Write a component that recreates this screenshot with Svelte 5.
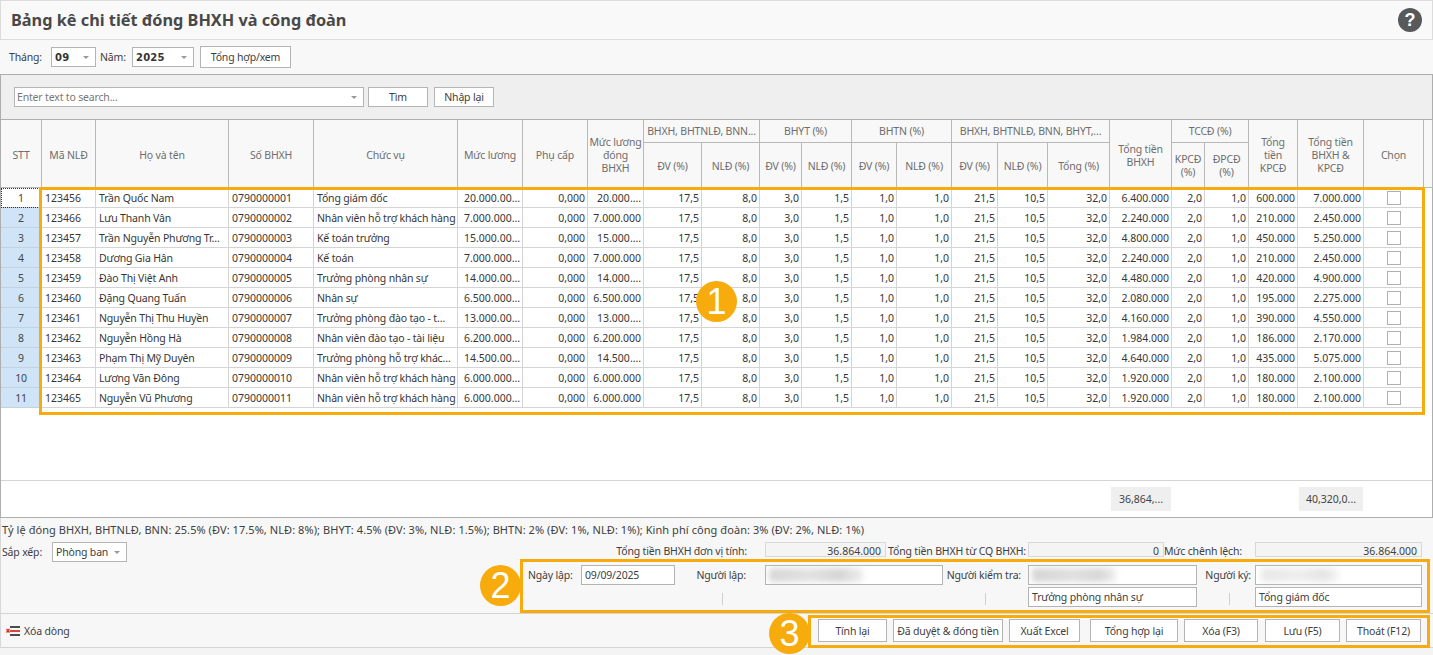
<script>
  const cols = [41,54,133,85,144,65,65,56,58,58,42,50,45,55,46,50,62,62,33,44,49,66,60,9];
  const rows = [
    ['123456','Trần Quốc Nam','0790000001','Tổng giám đốc','20.000.00…','20.000.…','6.400.000','600.000','7.000.000'],
    ['123466','Lưu Thanh Vân','0790000002','Nhân viên hỗ trợ khách hàng','7.000.000…','7.000.000','2.240.000','210.000','2.450.000'],
    ['123457','Trần Nguyễn Phương Tr…','0790000003','Kế toán trưởng','15.000.00…','15.000.…','4.800.000','450.000','5.250.000'],
    ['123458','Dương Gia Hân','0790000004','Kế toán','7.000.000…','7.000.000','2.240.000','210.000','2.450.000'],
    ['123459','Đào Thị Việt Anh','0790000005','Trưởng phòng nhân sự','14.000.00…','14.000.…','4.480.000','420.000','4.900.000'],
    ['123460','Đặng Quang Tuấn','0790000006','Nhân sự','6.500.000…','6.500.000','2.080.000','195.000','2.275.000'],
    ['123461','Nguyễn Thị Thu Huyền','0790000007','Trưởng phòng đào tạo - t…','13.000.00…','13.000.…','4.160.000','390.000','4.550.000'],
    ['123462','Nguyễn Hồng Hà','0790000008','Nhân viên đào tạo - tài liệu','6.200.000…','6.200.000','1.984.000','186.000','2.170.000'],
    ['123463','Phạm Thị Mỹ Duyên','0790000009','Trưởng phòng hỗ trợ khác…','14.500.00…','14.500.…','4.640.000','435.000','5.075.000'],
    ['123464','Lương Văn Đông','0790000010','Nhân viên hỗ trợ khách hàng','6.000.000…','6.000.000','1.920.000','180.000','2.100.000'],
    ['123465','Nguyễn Vũ Phương','0790000011','Nhân viên hỗ trợ khách hàng','6.000.000…','6.000.000','1.920.000','180.000','2.100.000'],
  ];
  const rates = ['17,5','8,0','3,0','1,5','1,0','1,0','21,5','10,5','32,0'];
  const buttons = ['Tính lại','Đã duyệt & đóng tiền','Xuất Excel','Tổng hợp lại','Xóa (F3)','Lưu (F5)','Thoát (F12)'];
</script>

<div class="page">
  <header class="title">
    <h1>Bảng kê chi tiết đóng BHXH và công đoàn</h1>
    <span class="help">?</span>
  </header>

  <div class="filter">
    <span class="lbl thang">Tháng:</span>
    <span class="select bold month">09<i class="caret"></i></span>
    <span class="lbl nam">Năm:</span>
    <span class="select bold year">2025<i class="caret"></i></span>
    <button class="btn view">Tổng hợp/xem</button>
  </div>

  <div class="search">
    <span class="select box">Enter text to search...<i class="caret"></i></span>
    <button class="btn find">Tìm</button>
    <button class="btn find">Nhập lại</button>
  </div>

  <div class="grid">
    <table>
      <colgroup>
        {#each cols as w}<col style="width:{w}px" />{/each}
      </colgroup>
      <thead>
        <tr class="h1">
          <th class="span" rowspan="2">STT</th>
          <th class="span" rowspan="2">Mã NLĐ</th>
          <th class="span" rowspan="2">Họ và tên</th>
          <th class="span" rowspan="2">Số BHXH</th>
          <th class="span" rowspan="2">Chức vụ</th>
          <th class="span" rowspan="2">Mức lương</th>
          <th class="span" rowspan="2">Phụ cấp</th>
          <th class="span" rowspan="2">Mức lương<br />đóng<br />BHXH</th>
          <th colspan="2">BHXH, BHTNLĐ, BNN...</th>
          <th colspan="2">BHYT (%)</th>
          <th colspan="2">BHTN (%)</th>
          <th colspan="3">BHXH, BHTNLĐ, BNN, BHYT,...</th>
          <th class="span" rowspan="2">Tổng tiền<br />BHXH</th>
          <th colspan="2">TCCĐ (%)</th>
          <th class="span" rowspan="2">Tổng<br />tiền<br />KPCĐ</th>
          <th class="span" rowspan="2">Tổng tiền<br />BHXH &amp;<br />KPCĐ</th>
          <th class="span" rowspan="2">Chọn</th>
          <th rowspan="2"></th>
        </tr>
        <tr class="h2">
          <th>ĐV (%)</th><th>NLĐ (%)</th>
          <th>ĐV (%)</th><th>NLĐ (%)</th>
          <th>ĐV (%)</th><th>NLĐ (%)</th>
          <th>ĐV (%)</th><th>NLĐ (%)</th><th>Tổng (%)</th>
          <th>KPCĐ<br />(%)</th><th>ĐPCĐ<br />(%)</th>
        </tr>
      </thead>
      <tbody>
        {#each rows as r, i}
          <tr>
            <td class="stt" class:first={i === 0}>{i + 1}</td>
            <td class="num">{r[0]}</td>
            <td>{r[1]}</td>
            <td class="num">{r[2]}</td>
            <td>{r[3]}</td>
            <td class="n">{r[4]}</td>
            <td class="n">0,000</td>
            <td class="n">{r[5]}</td>
            {#each rates as v}<td class="n">{v}</td>{/each}
            <td class="n">{r[6]}</td>
            <td class="n">2,0</td>
            <td class="n">1,0</td>
            <td class="n">{r[7]}</td>
            <td class="n">{r[8]}</td>
            <td class="chk"><span class="check"></span></td>
            <td class="end"></td>
          </tr>
        {/each}
      </tbody>
    </table>
    <div class="empty"></div>
    <div class="totals">
      <span class="sum a">36,864,...</span>
      <span class="sum b">40,320,0...</span>
    </div>
  </div>

  <section class="bottom">
    <p class="note">Tỷ lệ đóng BHXH, BHTNLĐ, BNN: 25.5% (ĐV: 17.5%, NLĐ: 8%); BHYT: 4.5% (ĐV: 3%, NLĐ: 1.5%); BHTN: 2% (ĐV: 1%, NLĐ: 1%); Kinh phí công đoàn: 3% (ĐV: 2%, NLĐ: 1%)</p>
    <div class="split">
      <div class="sort">
        <span class="lbl">Sắp xếp:</span>
        <span class="select sortsel">Phòng ban<i class="caret"></i></span>
      </div>
      <div class="right">
        <div class="sums">
          <span class="lab l1">Tổng tiền BHXH đơn vị tính:</span>
          <span class="ro w1">36.864.000</span>
          <span class="lab l2">Tổng tiền BHXH từ CQ BHXH:</span>
          <span class="ro w2">0</span>
          <span class="lab l3">Mức chênh lệch:</span>
          <span class="ro w3">36.864.000</span>
        </div>
        <div class="form">
          <div class="fdate">
            <span class="lbl">Ngày lập:</span>
            <span class="input date">09/09/2025</span>
          </div>
          <div class="fperson p1">
            <span class="flabel">Người lập:<i class="tick"></i></span>
            <div class="stack"><span class="input"><b class="blur b1"></b></span></div>
          </div>
          <div class="fperson p2">
            <span class="flabel">Người kiểm tra:<i class="tick"></i></span>
            <div class="stack">
              <span class="input"><b class="blur b2"></b></span>
              <span class="input">Trưởng phòng nhân sự</span>
            </div>
          </div>
          <div class="fperson p3">
            <span class="flabel">Người ký:<i class="tick"></i></span>
            <div class="stack">
              <span class="input"><b class="blur b3"></b></span>
              <span class="input">Tổng giám đốc</span>
            </div>
          </div>
        </div>
      </div>
    </div>
  </section>

  <footer class="actions">
    <span class="del">
      <svg width="14" height="10" viewBox="0 0 14 10">
        <path d="M0.5 3l3 3.5M3.5 3L0.5 6.5" stroke="#e2231a" stroke-width="1.3" fill="none" />
        <path d="M4 1h10M4 9h10" stroke="#4d4d4d" stroke-width="2" fill="none" />
        <path d="M4 5h10" stroke="#d9463e" stroke-width="2" fill="none" />
      </svg>
      Xóa dòng
    </span>
    <div class="btns">
      {#each buttons as b, i}<button class="btn act a{i}">{b}</button>{/each}
    </div>
  </footer>

  <div class="hl h-1"></div>
  <div class="hl h-2"></div>
  <div class="hl h-3"></div>
  <span class="badge b-1">1</span>
  <span class="badge b-2">2</span>
  <span class="badge b-3">3</span>
</div>

<style>
  :global(body) { margin: 0; background: #fff; }
  .page {
    position: relative; width: 1433px; height: 655px; overflow: hidden;
    font-family: "Noto Sans", "DejaVu Sans", sans-serif; font-size: 10.5px; color: #3c3c3c;
    letter-spacing: -0.17px;
    background: #f4f4f4; display: flex; flex-direction: column; box-sizing: border-box;
  }
  .title {
    height: 40px; box-sizing: border-box; flex: none; display: flex; align-items: center; justify-content: space-between;
    padding: 0 10px; background: #f9f9f9; border: 1px solid #dcdcdc;
  }
  h1 { margin: 0; font: bold 16.3px "Noto Sans", sans-serif; color: #484848; letter-spacing: 0; }
  .help {
    width: 24px; height: 24px; border-radius: 50%; background: #58595b; color: #fff; flex: none;
    font: bold 18px/24px "Liberation Sans", sans-serif; text-align: center; letter-spacing: 0;
  }
  .filter { height: 34px; flex: none; box-sizing: border-box; display: flex; align-items: center; padding: 0 0 0 9px; background: #f8f8f8; }
  .lbl { color: #404040; }
  .thang { width: 42px; }
  .select {
    position: relative; display: inline-flex; align-items: center; box-sizing: border-box; background: #fff;
    border: 1px solid #b4b4b4; height: 20px; padding-left: 3px; color: #404040; flex: none;
  }
  .caret {
    position: absolute; right: 6px; top: 8px; width: 0; height: 0;
    border-left: 3px solid transparent; border-right: 3px solid transparent; border-top: 3px solid #999;
  }
  .bold { font-weight: bold; padding-left: 3px; font-family: "DejaVu Sans", sans-serif; font-size: 10px; color: #333; letter-spacing: 0.2px; }
  .month { width: 45px; }
  .nam { margin-left: 4px; width: 32px; }
  .year { width: 62px; }
  .btn {
    font: inherit; letter-spacing: inherit; color: #404040; background: #fff; border: 1px solid #b4b4b4; border-radius: 0; padding: 0;
    box-sizing: border-box; white-space: nowrap;
  }
  .view { width: 91px; height: 22px; margin-left: 6px; }
  .search {
    height: 45px; flex: none; box-sizing: border-box; display: flex; align-items: center; gap: 6px; padding: 0 0 0 13px;
    background: #efefef; border-top: 1px solid #aeaeae; border-left: 1px solid #aeaeae; border-right: 1px solid #aeaeae;
  }
  .box { width: 350px; color: #777; margin-right: -2px; padding-left: 2px; }
  .find { width: 60px; height: 20px; }
  .grid {
    flex: none; height: 399px; box-sizing: border-box; background: #fff; display: flex; flex-direction: column;
    border: 1px solid #aeaeae;
  }
  table { border-collapse: separate; border-spacing: 0; table-layout: fixed; width: 1431px; flex: none; }
  th {
    background: #f8f8f8; color: #6e6e6e; font-weight: normal; text-align: center; line-height: 13px; padding: 2px 0 0;
    border-right: 1px solid #b8b8b8; border-bottom: 1px solid #b8b8b8; white-space: nowrap; overflow: hidden; box-sizing: border-box;
  }
  .h1 th { padding-top: 0; }
  .h1 .span { padding-top: 4px; }
  .h1 { height: 23px; }
  .h2 { height: 45px; }
  td {
    height: 20px; box-sizing: border-box; padding: 0 2px 0 3px; white-space: nowrap; overflow: hidden;
    border-right: 1px solid #d4d4d4; border-bottom: 1px solid #d4d4d4; color: #363636;
  }
  .n, .num { letter-spacing: 0; }
  .n { text-align: right; }
  .stt { text-align: center; background: #cfe4f7; padding: 0; color: #444; border-color: #c4d2de; }
  .stt.first { background: #fff; outline: 1px dotted #333; outline-offset: -1px; }
  .chk { text-align: center; padding: 0; line-height: 0; }
  .check { display: inline-block; width: 14px; height: 14px; box-sizing: border-box; border: 1px solid #b0b0b0; background: #fff; vertical-align: middle; }
  .end { border: 0; }
  .empty { height: 72px; flex: none; border-bottom: 1px solid #d4d4d4; }
  .totals { flex: 1; display: flex; align-items: center; padding-left: 1110px; }
  .sum { background: #efefef; height: 24px; display: flex; align-items: center; justify-content: center; color: #444; box-sizing: border-box; letter-spacing: 0; }
  .sum.a { width: 60px; }
  .sum.b { width: 64px; margin-left: 128px; }
  .bottom { flex: none; height: 96px; box-sizing: border-box; background: #f7f7f7; border-bottom: 1px solid #d4d4d4; border-left: 1px solid #d8d8d8; }
  .note { margin: 0; height: 24px; line-height: 24px; padding-left: 1px; color: #404040; white-space: nowrap; font-size: 11px; letter-spacing: 0.065px; }
  .split { display: flex; }
  .sort { width: 519px; flex: none; padding-left: 1px; box-sizing: border-box; display: flex; align-items: flex-start; }
  .sort .lbl { line-height: 20px; width: 50px; }
  .sortsel { width: 75px; }
  .right { flex: 1; }
  .sums { display: flex; height: 17px; }
  .ro {
    box-sizing: border-box; height: 15px; border: 1px solid #d8d8d8; background: #f4f4f4; text-align: right;
    padding-right: 4px; line-height: 16px; color: #404040; letter-spacing: 0;
  }
  .lab { line-height: 18px; text-align: right; white-space: nowrap; color: #404040; }
  .l1 { width: 245px; padding-right: 18px; box-sizing: border-box; }
  .w1 { width: 121px; }
  .l2 { width: 142px; box-sizing: border-box; padding-right: 2px; }
  .w2 { width: 136px; }
  .l3 { width: 91px; box-sizing: border-box; padding-right: 14px; }
  .w3 { width: 167px; }
  .form { display: flex; padding-top: 6px; position: relative; }
  .fdate { width: 245px; flex: none; display: flex; padding-left: 8px; box-sizing: border-box; align-items: flex-start; }
  .fdate .lbl { line-height: 20px; width: 53px; }
  .input {
    display: flex; align-items: center; box-sizing: border-box; height: 20px; background: #fff; border: 1px solid #b4b4b4; padding-left: 3px; color: #404040;
    overflow: hidden;
  }
  .date { width: 94px; }
  .fperson { display: flex; flex: none; position: relative; }
  .flabel { position: absolute; text-align: right; line-height: 20px; color: #404040; box-sizing: border-box; white-space: nowrap; }
  .tick { position: absolute; top: 28px; width: 1px; height: 12px; background: #cfcfcf; }
  .stack { display: flex; flex-direction: column; gap: 2px; width: 100%; }
  .p1 { width: 178px; margin-right: 85px; }
  .p1 .flabel { right: 197px; width: 60px; }
  .p1 .tick { left: 36px; }
  .p2 { width: 169px; margin-right: 58px; }
  .p2 .flabel { right: 176px; width: 80px; }
  .p2 .tick { left: 44px; }
  .p3 { width: 167px; }
  .p3 .flabel { right: 171px; width: 60px; }
  .p3 .tick { left: 38px; }
  .blur { display: block; height: 14px; filter: blur(3px); flex: none; }
  .b1 { width: 94px; background: linear-gradient(90deg, #d6d6d6, #e2e2e2 45%, #d4d4d4 75%, #eeeeee); }
  .b2 { width: 84px; background: linear-gradient(90deg, #d4d4d4, #e0e0e0 50%, #d6d6d6 80%, #efefef); }
  .b3 { width: 78px; margin-left: 2px; background: linear-gradient(90deg, #e8e8e8, #eeeeee 50%, #e4e4e4 80%, #f6f6f6); }
  .actions {
    flex: none; height: 34px; display: flex; align-items: flex-start; justify-content: space-between; background: #f7f7f7; box-sizing: border-box;
    padding-top: 5px; border-bottom: 1px solid #d4d4d4; border-left: 1px solid #d8d8d8;
  }
  .del { display: flex; align-items: center; gap: 4px; margin: 5px 0 0 5px; color: #404040; }
  .btns { display: flex; gap: 6px; margin-right: 12px; }
  .act { height: 23px; }
  .a0 { width: 69px; }
  .a1 { width: 110px; }
  .a2 { width: 71px; margin-right: 4px; }
  .a3 { width: 88px; }
  .a4 { width: 74px; margin-right: 1px; }
  .a5 { width: 75px; }
  .a6 { width: 75px; }
  .hl { position: absolute; box-sizing: border-box; border: 3px solid #f8ab0c; }
  .h-1 { left: 39px; top: 187px; width: 1386px; height: 228px; }
  .h-2 { left: 520px; top: 559px; width: 910px; height: 54px; }
  .h-3 { left: 808px; top: 615px; width: 622px; height: 33px; }
  .badge {
    position: absolute; width: 41px; height: 41px; border-radius: 50%; background: #f8ab0c; color: #fff;
    font: 36px/41px "Liberation Sans", sans-serif; text-align: center; letter-spacing: 0;
  }
  .b-1 { left: 696px; top: 281px; }
  .b-2 { left: 480px; top: 565px; }
  .b-3 { left: 769px; top: 613px; }
</style>
